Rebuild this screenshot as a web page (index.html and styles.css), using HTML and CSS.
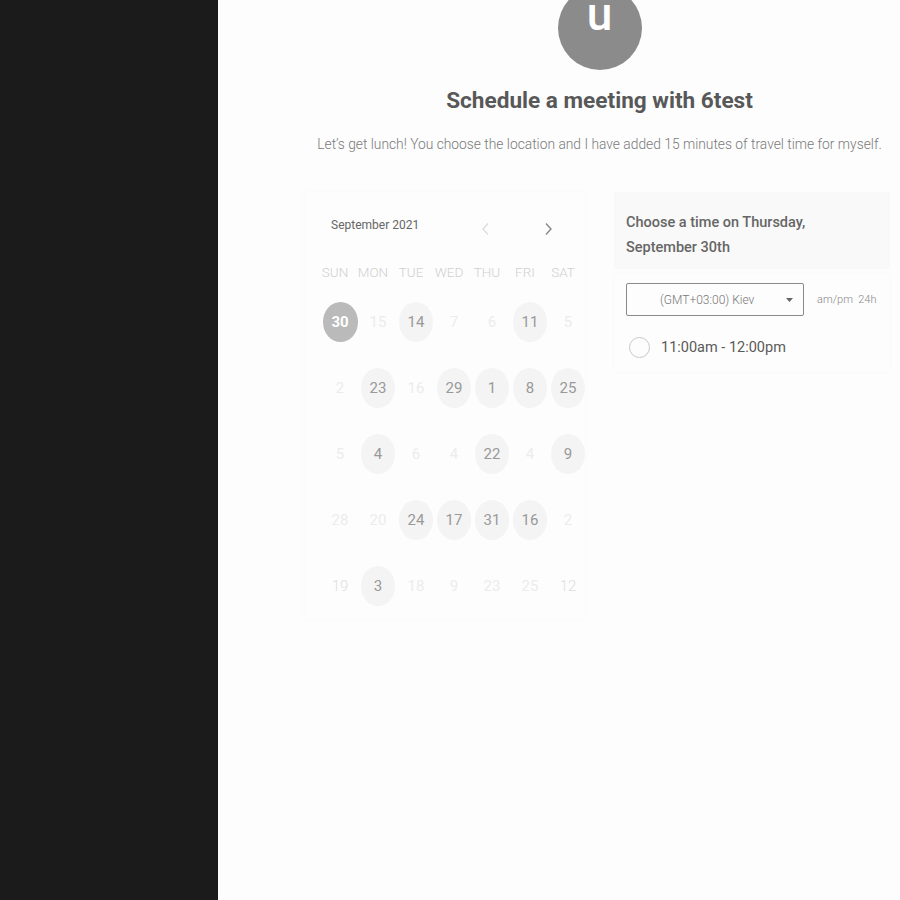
FILE: index.html
```html
<!DOCTYPE html>
<html>
<head>
<meta charset="utf-8">
<link rel="stylesheet" href="styles.css">
</head>
<body>
<div class="sidebar"></div>
<main class="main">
  <div class="wrap">
    <div class="avatar">u</div>
    <h1 class="title">Schedule a meeting with 6test</h1>
    <p class="desc">Let’s get lunch! You choose the location and I have added 15 minutes of travel time for myself.</p>
    <div class="columns">
      <section class="calendar">
        <div class="cal-head">
          <span class="month">September 2021</span>
          <span class="nav prev"><svg width="10" height="14" viewBox="0 0 10 14"><path d="M7 1.5 L2 7 L7 12.5" fill="none" stroke="currentColor" stroke-width="1.4"/></svg></span>
          <span class="nav next"><svg width="10" height="14" viewBox="0 0 10 14"><path d="M3 1.5 L8 7 L3 12.5" fill="none" stroke="currentColor" stroke-width="1.4"/></svg></span>
        </div>
        <div class="grid">
          <span class="dow">SUN</span><span class="dow">MON</span><span class="dow">TUE</span><span class="dow">WED</span><span class="dow">THU</span><span class="dow">FRI</span><span class="dow">SAT</span>

          <span class="day"><b class="sel">30</b></span><span class="day"><b class="off">15</b></span><span class="day"><b class="on">14</b></span><span class="day"><b class="off">7</b></span><span class="day"><b class="off">6</b></span><span class="day"><b class="on">11</b></span><span class="day"><b class="off">5</b></span>

          <span class="day"><b class="off">2</b></span><span class="day"><b class="on">23</b></span><span class="day"><b class="off">16</b></span><span class="day"><b class="on">29</b></span><span class="day"><b class="on">1</b></span><span class="day"><b class="on">8</b></span><span class="day"><b class="on">25</b></span>

          <span class="day"><b class="off">5</b></span><span class="day"><b class="on">4</b></span><span class="day"><b class="off">6</b></span><span class="day"><b class="off">4</b></span><span class="day"><b class="on">22</b></span><span class="day"><b class="off">4</b></span><span class="day"><b class="on">9</b></span>

          <span class="day"><b class="off">28</b></span><span class="day"><b class="off">20</b></span><span class="day"><b class="on">24</b></span><span class="day"><b class="on">17</b></span><span class="day"><b class="on">31</b></span><span class="day"><b class="on">16</b></span><span class="day"><b class="off">2</b></span>

          <span class="day"><b class="off2">19</b></span><span class="day"><b class="on">3</b></span><span class="day"><b class="off">18</b></span><span class="day"><b class="off">9</b></span><span class="day"><b class="off">23</b></span><span class="day"><b class="off">25</b></span><span class="day"><b class="off2">12</b></span>
        </div>
      </section>
      <section class="times">
        <div class="times-head">Choose a time on Thursday,<br>September 30th</div>
        <div class="times-card">
          <div class="tz-row">
            <div class="select">
              <span class="select-text">(GMT+03:00) Kiev</span>
              <svg class="caret" width="7" height="4" viewBox="0 0 7 4"><path d="M0 0 H7 L3.5 4 Z" fill="#666"/></svg>
            </div>
            <span class="fmt">am/pm&nbsp;&nbsp;24h</span>
          </div>
          <label class="slot">
            <span class="radio"></span>
            <span class="slot-text">11:00am - 12:00pm</span>
          </label>
        </div>
      </section>
    </div>
  </div>
</main>
</body>
</html>
```

FILE: styles.css
```css
* { box-sizing: border-box; }
html, body { margin: 0; height: 100%; }
body {
  display: flex;
  font-family: Roboto, "Liberation Sans", sans-serif;
  background: #fdfdfd;
  overflow: hidden;
}
.sidebar {
  width: 218px;
  flex: none;
  background: #1b1b1b;
}
.main {
  flex: 1;
  padding-left: 87px;
  background: #fdfdfd;
}
.wrap {
  width: 585px;
  display: flex;
  flex-direction: column;
  align-items: center;
}
.avatar {
  width: 84px;
  height: 84px;
  margin-top: -14px;
  margin-left: 4px;
  border-radius: 50%;
  background: #8b8b8b;
  color: #fff;
  font-size: 46px;
  font-weight: 500;
  display: flex;
  align-items: center;
  justify-content: center;
  line-height: 1;
  padding-bottom: 28px;
}
.title {
  margin: 18px 0 0 4px;
  font-size: 22.6px;
  font-weight: 700;
  color: #585858;
  line-height: 26px;
}
.desc {
  margin: 20px 0 0 4px;
  font-size: 13.8px;
  font-weight: 300;
  color: #7a7a7a;
  white-space: nowrap;
  line-height: 20px;
}
.columns {
  align-self: stretch;
  display: flex;
  gap: 29px;
  margin-top: 38px;
}
.calendar {
  width: 280px;
  height: 427px;
  padding: 0 14px 0 16px;
  background: #fdfdfd;
  box-shadow: 0 0 6px rgba(0,0,0,0.025);
}
.cal-head {
  display: flex;
  align-items: center;
  height: 72px;
  padding-left: 10px;
  padding-top: 0;
}
.month {
  font-size: 12px;
  color: #666;
  width: 149px;
  margin-bottom: 6px;
}
.nav { display: flex; align-items: center; justify-content: center; width: 12px; height: 14px; margin-top: 2px; }
.prev { color: #ddd; margin-right: 50px; }
.next { color: #888; }
.grid {
  display: grid;
  grid-template-columns: repeat(7, 38px);
  grid-auto-rows: 66px;
  grid-template-rows: 38px;
}
.dow {
  font-size: 13.5px;
  font-weight: 300;
  color: #d0d0d0;
  text-align: center;
  padding-right: 14px;
  margin-right: -14px;
  margin-left: -10px;
  white-space: nowrap;
  line-height: 16px;
}
.day {
  display: flex;
  justify-content: center;
  align-items: flex-start;
}
.day b {
  width: 34px;
  height: 40px;
  border-radius: 50%;
  display: flex;
  align-items: center;
  justify-content: center;
  font-size: 15px;
  font-weight: 400;
  margin-top: 0;
}
.day b.on { background: #f4f4f4; color: #999; }
.day b.off { color: #ececec; }
.day b.off2 { color: #dedede; font-weight: 300; }
.day b.sel { background: #bababa; color: #fff; font-weight: 700; width: 35px; }
.times { flex: 1; }
.times-head {
  height: 77px;
  background: #f9f9f9;
  padding: 18px 12px 0;
  font-size: 14.5px;
  font-weight: 500;
  color: #666;
  line-height: 25px;
}
.times-card {
  margin-top: 5px;
  height: 98px;
  background: #fdfdfd;
  box-shadow: 0 0 4px rgba(0,0,0,0.03);
  padding: 9px 12px 0;
}
.tz-row {
  display: flex;
  align-items: center;
}
.select {
  width: 178px;
  height: 33px;
  border: 1px solid #8a8a8a;
  border-radius: 2px;
  display: flex;
  align-items: center;
  padding-left: 33px;
  padding-right: 10px;
}
.select-text {
  flex: 1;
  font-size: 12px;
  font-weight: 300;
  color: #777;
}
.caret { margin-top: 1px; }
.fmt {
  margin-left: 13px;
  font-size: 11px;
  font-weight: 300;
  color: #888;
}
.slot {
  display: flex;
  align-items: center;
  margin-top: 21px;
  padding-left: 3px;
}
.radio {
  width: 21px;
  height: 21px;
  border: 1px solid #c8c8c8;
  border-radius: 50%;
  margin-right: 11px;
}
.slot-text {
  font-size: 14.5px;
  color: #5a5a5a;
}
```
